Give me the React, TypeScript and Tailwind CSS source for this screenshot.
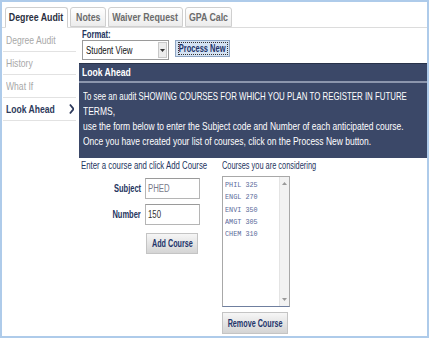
import React from "react";

// text in the shot is horizontally squashed, so squeeze the glyphs
const sqL = "inline-block whitespace-nowrap scale-x-[0.78] origin-left";
const sqR = "inline-block whitespace-nowrap scale-x-[0.75] origin-right";
const sqC = "inline-block whitespace-nowrap scale-x-[0.75] origin-center";

const tabs = [
  { label: "Degree Audit", active: true, w: "w-[63px]" },
  { label: "Notes", active: false, w: "w-[36px]" },
  { label: "Waiver Request", active: false, w: "w-[75px]" },
  { label: "GPA Calc", active: false, w: "w-[47px]" },
];

const navItems = [
  { label: "Degree Audit", active: false },
  { label: "History", active: false },
  { label: "What If", active: false },
  { label: "Look Ahead", active: true },
];

const courses = ["PHIL 325", "ENGL 270", "ENVI 350", "AMGT 305", "CHEM 310"];

export default function App() {
  return (
    <div className="w-[429px] h-[338px] border-2 border-[#aecbea] bg-white text-[#24345e] font-['Liberation_Sans',Arial,sans-serif] overflow-hidden">
      {/* Tabs */}
      <div className="flex items-end gap-[2px] pl-[3px] pt-[5px] h-[26px] border-b border-[#dcdcdc]">
        {tabs.map((tab) => (
          <div
            key={tab.label}
            className={`${tab.w} flex items-center justify-center rounded-t-[3px] border border-[#cfcfcf] text-[11px] font-bold ${
              tab.active
                ? "h-[21px] -mb-px bg-white text-[#2a2f40] border-b-white"
                : "h-[20px] bg-gradient-to-b from-white to-[#ececec] text-[#6b6b6b]"
            }`}
          >
            <span className="inline-block whitespace-nowrap scale-x-[0.8]">{tab.label}</span>
          </div>
        ))}
      </div>

      <div className="flex">
        {/* Left nav */}
        <div className="w-[74px] pt-[1px] pl-[1px]">
          {navItems.map((item) => (
            <div
              key={item.label}
              className={`h-[23px] flex items-center justify-between border-b border-[#e2e2e2] pl-[3px] text-[11px] ${
                item.active ? "text-[#2e3a5c] font-bold" : "text-[#a8a8a8]"
              }`}
            >
              <span className={sqL}>{item.label}</span>
              {item.active && (
                <svg width="6" height="12" viewBox="0 0 6 12" className="mr-[2px]">
                  <polyline points="1,1 5,6 1,11" fill="none" stroke="#2e3a5c" strokeWidth="2" />
                </svg>
              )}
            </div>
          ))}
        </div>

        {/* Main */}
        <div className="flex-1 ml-[3px]">
          <div className="pl-[3px]">
            <div className="h-[12px] text-[11px] leading-[12px] font-bold">
              <span className="inline-block whitespace-nowrap scale-x-[0.7] origin-left">Format:</span>
            </div>
            <div className="flex items-start gap-[6px]">
              <div className="w-[87px] h-[20px] border border-[#9a9a9a] bg-white flex items-center">
                <span className="flex-1 pl-[3px] text-[11px] text-[#111]">
                  <span className="inline-block whitespace-nowrap scale-x-[0.72] origin-left">Student View</span>
                </span>
                <div className="w-[9px] h-[16px] mr-[1px] border border-[#c8c8c8] bg-[#ececec] flex items-center justify-center">
                  <svg width="5" height="3" viewBox="0 0 5 3">
                    <polygon points="0,0 5,0 2.5,3" fill="#333" />
                  </svg>
                </div>
              </div>
              <div className="w-[55px] h-[17px] border border-[#8fa6c4] bg-[#d4e2f3] flex items-center justify-center">
                <span className="w-[50px] h-[13px] border border-dotted border-[#333] flex items-center justify-center text-[10px] font-bold text-[#22346a]">
                  <span className={sqC}>Process New</span>
                </span>
              </div>
            </div>
          </div>

          {/* Look Ahead panel */}
          <div className="mt-[3px] bg-[#3b4868] border-t border-[#283249] text-white">
            <div className="h-[17px] flex items-center pl-[3px] text-[11px] font-bold">
              <span className={sqL}>Look Ahead</span>
            </div>
            <div className="h-[2px] bg-[#8c96ad]" />
            <div className="h-[75px] pl-[4px] pt-[6px] text-[11px] leading-[15px]">
              <div className="whitespace-nowrap scale-x-[0.715] origin-left">
                To see an audit SHOWING COURSES FOR WHICH YOU PLAN TO REGISTER IN FUTURE
              </div>
              <div className="whitespace-nowrap scale-x-[0.77] origin-left">TERMS,</div>
              <div className="whitespace-nowrap scale-x-[0.77] origin-left">
                use the form below to enter the Subject code and Number of each anticipated course.
              </div>
              <div className="whitespace-nowrap scale-x-[0.77] origin-left">
                Once you have created your list of courses, click on the Process New button.
              </div>
            </div>
          </div>

          {/* Form */}
          <div className="flex pl-[2px] pt-[1px]">
            <div className="w-[141px]">
              <div className="h-[14px] text-[10px] leading-[14px]">
                <span className={sqL}>Enter a course and click Add Course</span>
              </div>
              <div className="flex items-center mt-[5px]">
                <span className="w-[64px] text-right pr-[4px] text-[10px] font-bold">
                  <span className={sqR}>Subject</span>
                </span>
                <div className="w-[55px] h-[21px] border border-[#b5b5b5] border-t-[#9a9a9a] flex items-center pl-[2px] text-[10px] text-[#7a7a8a]">
                  <span className={sqL}>PHED</span>
                </div>
              </div>
              <div className="flex items-center mt-[5px]">
                <span className="w-[64px] text-right pr-[4px] text-[10px] font-bold">
                  <span className={sqR}>Number</span>
                </span>
                <div className="w-[55px] h-[21px] border border-[#b5b5b5] border-t-[#9a9a9a] flex items-center pl-[2px] text-[10px] text-[#333]">
                  <span className={sqL}>150</span>
                </div>
              </div>
              <div className="ml-[65px] mt-[8px] w-[52px] h-[21px] border border-[#c4c4c4] bg-gradient-to-b from-[#f6f6f6] to-[#d4d4d4] flex items-center justify-center text-[10px] font-bold text-[#22346a]">
                <span className="inline-block whitespace-nowrap scale-x-[0.72]">Add Course</span>
              </div>
            </div>

            <div>
              <div className="h-[14px] text-[10px] leading-[14px]">
                <span className="inline-block whitespace-nowrap scale-x-[0.74] origin-left">Courses you are considering</span>
              </div>
              <div className="mt-[3px] w-[68px] h-[131px] border border-[#a8a8a8] border-b-[#6f7f9f] flex">
                <div className="flex-1 pt-[2px] pl-[2px] font-['Liberation_Mono',monospace] text-[8px] leading-[12.3px] text-[#5a6a9a]">
                  {courses.map((c) => (
                    <div key={c} className="whitespace-nowrap scale-x-[0.85] origin-left">
                      {c}
                    </div>
                  ))}
                </div>
                <div className="w-[10px] bg-[#f2f2f2] border-l border-[#e4e4e4] flex flex-col justify-between items-center py-[5px]">
                  <svg width="5" height="3" viewBox="0 0 5 3">
                    <polygon points="2.5,0 5,3 0,3" fill="#999" />
                  </svg>
                  <svg width="5" height="3" viewBox="0 0 5 3">
                    <polygon points="0,0 5,0 2.5,3" fill="#999" />
                  </svg>
                </div>
              </div>
              <div className="mt-[5px] w-[66px] h-[22px] border border-[#c4c4c4] bg-gradient-to-b from-[#f6f6f6] to-[#d4d4d4] flex items-center justify-center text-[10px] font-bold text-[#22346a]">
                <span className="inline-block whitespace-nowrap scale-x-[0.72]">Remove Course</span>
              </div>
            </div>
          </div>
        </div>
      </div>
    </div>
  );
}
